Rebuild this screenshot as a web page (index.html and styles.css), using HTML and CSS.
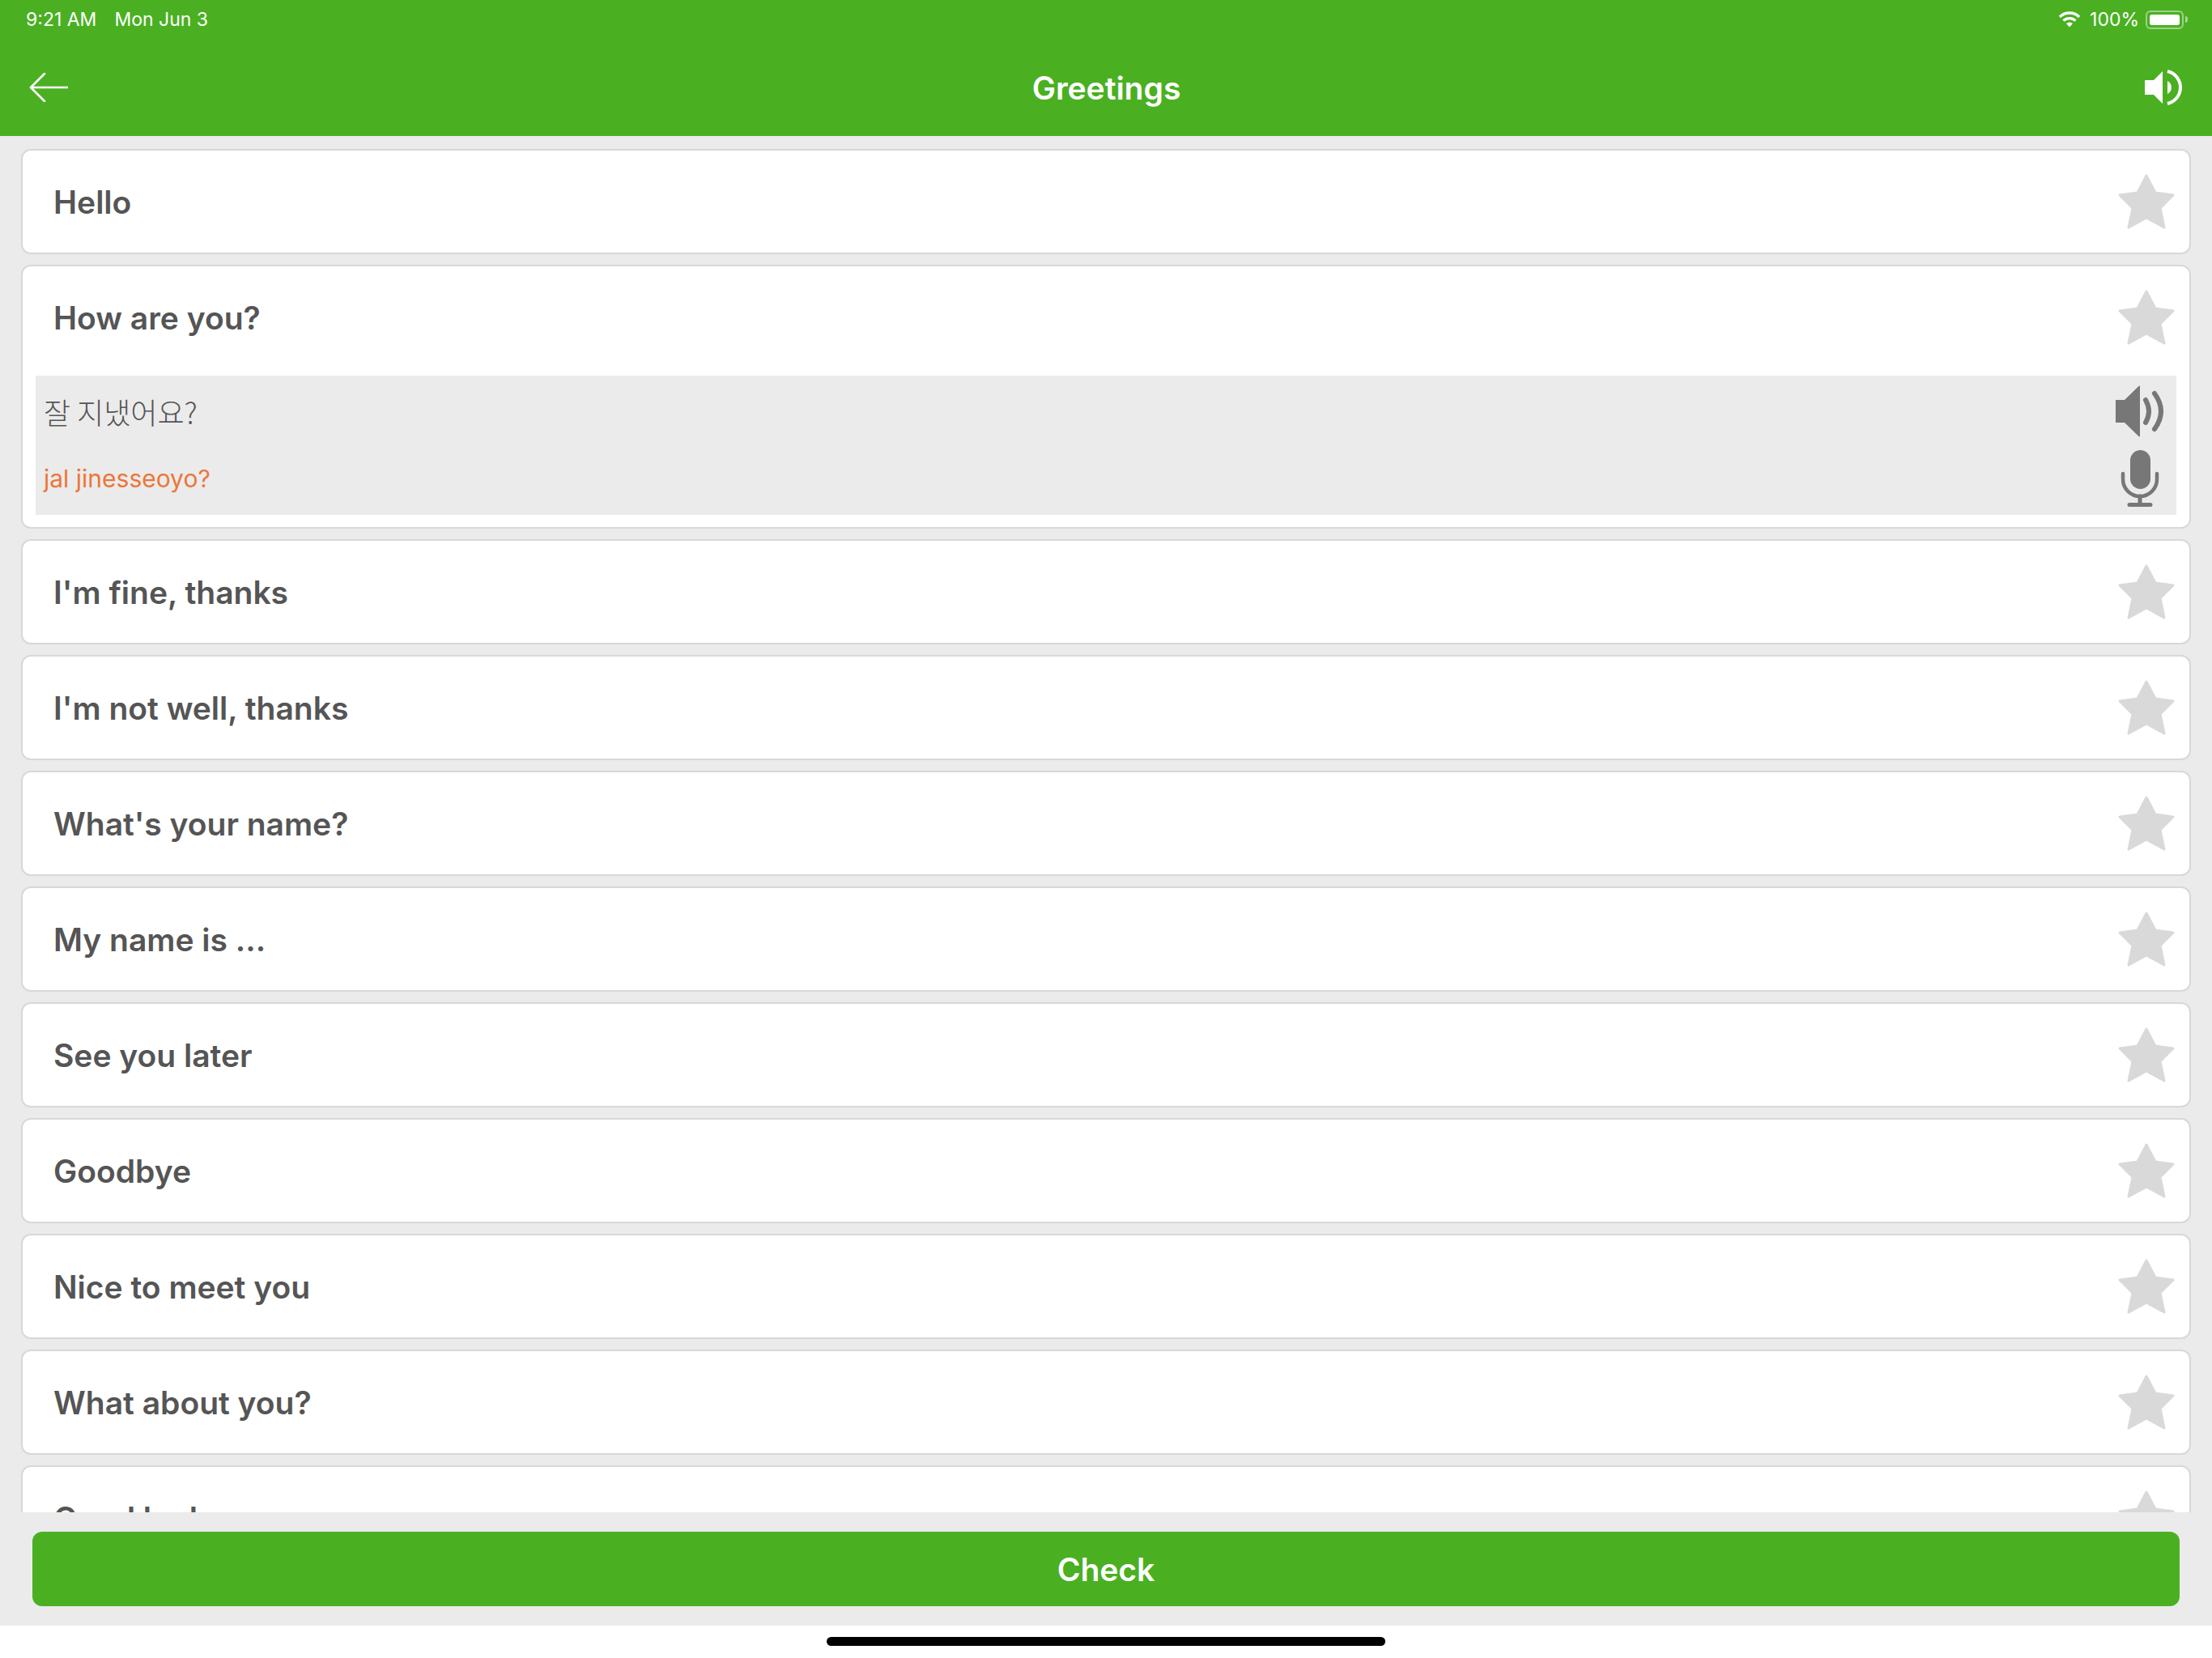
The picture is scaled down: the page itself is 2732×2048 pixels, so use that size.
FILE: index.html
```html
<!DOCTYPE html>
<html lang="en">
<head>
    <meta charset="UTF-8">
    <meta name="viewport" content="width=device-width, initial-scale=1.0">
    <title>Greetings</title>
    <link rel="stylesheet" href="styles.css">
</head>
<body>
    <svg class="icon-defs" width="0" height="0">
        <symbol id="star" viewBox="0 0 70 68">
            <path d="M35 2 L46 23 L68 26 L52 42 L57 66 L35 54 L13 66 L18 42 L2 26 L24 23 Z" fill="#d9d9d9" stroke="#d9d9d9" stroke-width="3" stroke-linejoin="round"/>
        </symbol>
    </svg>

    <header class="top">
        <div class="status-bar">
            <div class="status-left">
                <span>9:21 AM</span>
                <span>Mon Jun 3</span>
            </div>
            <div class="status-right">
                <svg class="wifi" viewBox="0 0 28 20" width="28" height="20">
                    <path d="M2 7 A17 17 0 0 1 26 7" fill="none" stroke="#fff" stroke-width="3.4"/>
                    <path d="M6.5 11.5 A11 11 0 0 1 21.5 11.5" fill="none" stroke="#fff" stroke-width="3.2"/>
                    <path d="M10 15 A6 6 0 0 1 18 15 L14 19.5 Z" fill="#fff"/>
                </svg>
                <span>100%</span>
                <div class="battery"><div class="battery-fill"></div></div>
                <div class="battery-nub"></div>
            </div>
        </div>
        <nav class="nav-bar">
            <svg class="nav-icon" viewBox="0 0 48 36" width="48" height="36">
                <path d="M47 18 H2 M19 1 L2 18 L19 35" fill="none" stroke="#fff" stroke-width="2.6" stroke-linecap="round" stroke-linejoin="round"/>
            </svg>
            <h1 class="nav-title">Greetings</h1>
            <svg class="nav-icon" viewBox="0 0 46 44" width="46" height="44">
                <path d="M0 13 H11 L22 2 V42 L11 31 H0 Z" fill="#fff"/>
                <path d="M28 14 A9 9 0 0 1 28 30 Z" fill="#fff"/>
                <path d="M28 2 A20.5 20.5 0 0 1 28 42" fill="none" stroke="#fff" stroke-width="4"/>
            </svg>
        </nav>
    </header>

    <main class="list">
        <div class="card">
            <div class="card-row"><span class="phrase">Hello</span><svg class="star"><use href="#star"/></svg></div>
        </div>
        <div class="card">
            <div class="card-row"><span class="phrase">How are you?</span><svg class="star"><use href="#star"/></svg></div>
            <div class="detail">
                <div class="detail-row detail-row-top">
                    <span class="korean">잘 지냈어요?</span>
                    <svg viewBox="0 0 60 64" width="60" height="64">
                        <path d="M0 18 H11 L29 0.5 Q30 0 30 2 V62 Q30 64 29 63.5 L11 46 H0 Z" fill="#777"/>
                        <path d="M37 18 Q45 32 37 46" fill="none" stroke="#777" stroke-width="6" stroke-linecap="round"/>
                        <path d="M48 10 Q64 32 48 54" fill="none" stroke="#777" stroke-width="6" stroke-linecap="round"/>
                    </svg>
                </div>
                <div class="detail-row detail-row-bottom">
                    <span class="roman">jal jinesseoyo?</span>
                    <svg viewBox="0 0 60 70" width="60" height="70">
                        <rect x="18" y="0" width="25" height="48" rx="12.5" fill="#777"/>
                        <path d="M9 29 V36 A21 21 0 0 0 51 36 V29" fill="none" stroke="#777" stroke-width="4.5" stroke-linecap="round"/>
                        <path d="M30 57 V67 M17 67.5 H43" fill="none" stroke="#777" stroke-width="5" stroke-linecap="round"/>
                    </svg>
                </div>
            </div>
        </div>
        <div class="card">
            <div class="card-row"><span class="phrase">I'm fine, thanks</span><svg class="star"><use href="#star"/></svg></div>
        </div>
        <div class="card">
            <div class="card-row"><span class="phrase">I'm not well, thanks</span><svg class="star"><use href="#star"/></svg></div>
        </div>
        <div class="card">
            <div class="card-row"><span class="phrase">What's your name?</span><svg class="star"><use href="#star"/></svg></div>
        </div>
        <div class="card">
            <div class="card-row"><span class="phrase">My name is ...</span><svg class="star"><use href="#star"/></svg></div>
        </div>
        <div class="card">
            <div class="card-row"><span class="phrase">See you later</span><svg class="star"><use href="#star"/></svg></div>
        </div>
        <div class="card">
            <div class="card-row"><span class="phrase">Goodbye</span><svg class="star"><use href="#star"/></svg></div>
        </div>
        <div class="card">
            <div class="card-row"><span class="phrase">Nice to meet you</span><svg class="star"><use href="#star"/></svg></div>
        </div>
        <div class="card">
            <div class="card-row"><span class="phrase">What about you?</span><svg class="star"><use href="#star"/></svg></div>
        </div>
        <div class="card">
            <div class="card-row"><span class="phrase">Good luck</span><svg class="star"><use href="#star"/></svg></div>
        </div>
    </main>

    <div class="footer">
        <button class="check-btn">Check</button>
    </div>

    <div class="home-area">
        <div class="home-bar"></div>
    </div>
</body>
</html>
```

FILE: styles.css
```css
/* Reset */
* {
    margin: 0;
    padding: 0;
    box-sizing: border-box;
    font-family: Inter, "Noto Sans", sans-serif;
}

body {
    display: flex;
    flex-direction: column;
    height: 2048px;
    overflow: hidden;
    background: #fff;
    color: #555;
}

.icon-defs {
    display: block;
    height: 0;
}

/* Header */
.top {
    height: 168px;
    flex: none;
    background: #4ab022;
    color: #fff;
}

.status-bar {
    display: flex;
    justify-content: space-between;
    align-items: center;
    height: 48px;
    padding: 0 30px 0 32px;
    font-size: 23px;
}

.status-left {
    display: flex;
    gap: 22px;
}

.status-right {
    display: flex;
    align-items: center;
}

.wifi {
    margin-right: 11px;
}

.battery {
    width: 47px;
    height: 23px;
    margin-left: 8px;
    padding: 3px;
    border: 2px solid rgba(255, 255, 255, 0.45);
    border-radius: 6px;
}

.battery-fill {
    height: 100%;
    background: #fff;
    border-radius: 3px;
}

.battery-nub {
    width: 3px;
    height: 8px;
    margin-left: 2px;
    background: rgba(255, 255, 255, 0.5);
    border-radius: 0 3px 3px 0;
}

.nav-bar {
    display: flex;
    align-items: center;
    height: 120px;
    padding: 0 37px 0 36px;
}

.nav-icon {
    flex: none;
}

.nav-title {
    flex: 1;
    text-align: center;
    font-size: 39px;
    font-weight: 600;
}

/* Phrase list */
.list {
    flex: 1;
    min-height: 0;
    overflow: hidden;
    display: flex;
    flex-direction: column;
    gap: 13px;
    padding: 16px 26px 0;
    background: #ebebeb;
}

.card {
    flex: none;
    background: #fff;
    border: 2px solid #d8d8d8;
    border-radius: 12px;
}

.card-row {
    display: flex;
    justify-content: space-between;
    align-items: center;
    height: 126px;
    padding: 0 18px 0 38px;
}

.phrase {
    font-size: 39px;
    font-weight: 600;
}

.star {
    width: 70px;
    height: 68px;
}

/* Expanded phrase */
.detail {
    margin: 9px 16px 15px;
    padding: 0 15px 0 10px;
    background: #ebebeb;
}

.detail-row {
    display: flex;
    justify-content: space-between;
    align-items: center;
}

.detail-row-top {
    height: 88px;
}

.detail-row-bottom {
    height: 84px;
    padding-bottom: 6px;
}

.korean {
    font-family: "Noto Sans CJK KR", sans-serif;
    font-size: 36px;
    font-weight: 300;
}

.roman {
    font-size: 30px;
    color: #ec763a;
}

/* Footer */
.footer {
    flex: none;
    height: 140px;
    padding: 24px 40px;
    background: #ebebeb;
}

.check-btn {
    display: block;
    width: 100%;
    height: 92px;
    background: #4ab022;
    border: none;
    border-radius: 12px;
    color: #fff;
    font-size: 39px;
    font-weight: 600;
}

.home-area {
    flex: none;
    height: 40px;
    display: flex;
    justify-content: center;
    padding-top: 14px;
}

.home-bar {
    width: 690px;
    height: 11px;
    background: #000;
    border-radius: 6px;
}
```
